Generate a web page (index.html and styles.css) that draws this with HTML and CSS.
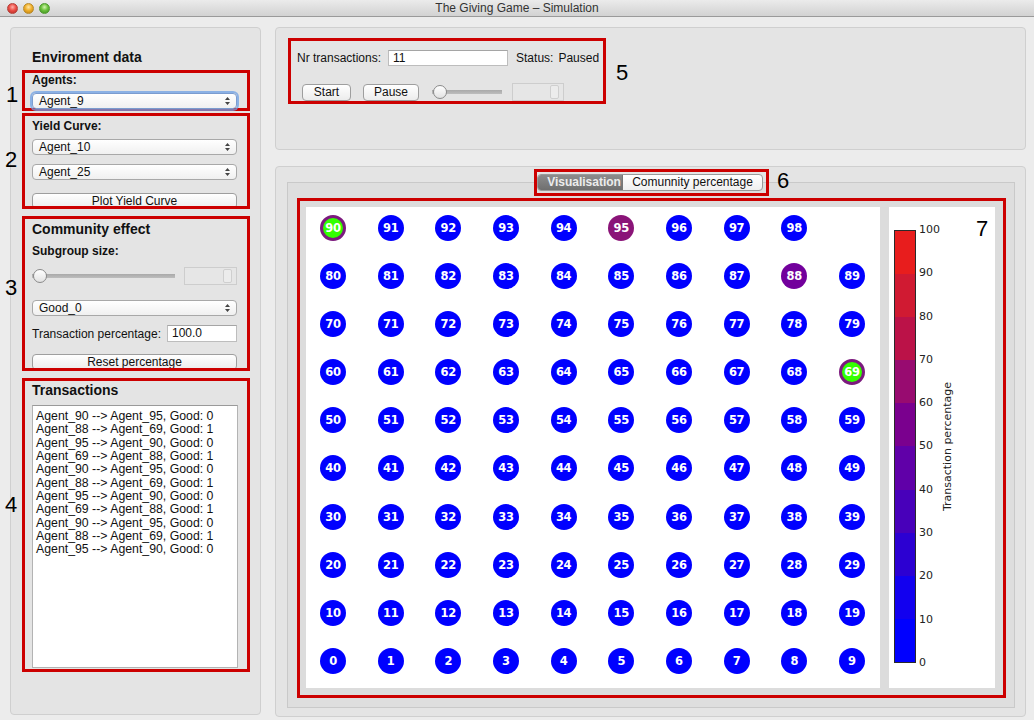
FILE: index.html
```html
<!DOCTYPE html>
<html>
<head>
<meta charset="utf-8">
<title>The Giving Game – Simulation</title>
<link rel="stylesheet" href="styles.css">
</head>
<body>
<div class="titlebar">
  <div class="lights"><span class="light l-red"></span><span class="light l-yellow"></span><span class="light l-green"></span></div>
  <div class="title">The Giving Game – Simulation</div>
  <div></div>
</div>

<div class="main">
  <div class="left">
    <div class="h1">Enviroment data</div>

    <div class="mark box1">
      <div class="lbl">Agents:</div>
      <div class="popup focus"><span>Agent_9</span><svg class="updown" width="7" height="10" viewBox="0 0 7 10"><path d="M3.5 1L6 4H1Z M3.5 9L1 6H6Z" fill="#444"/></svg></div>
    </div>

    <div class="mark box2">
      <div class="lbl">Yield Curve:</div>
      <div class="popup p1"><span>Agent_10</span><svg class="updown" width="7" height="10" viewBox="0 0 7 10"><path d="M3.5 1L6 4H1Z M3.5 9L1 6H6Z" fill="#444"/></svg></div>
      <div class="popup p2"><span>Agent_25</span><svg class="updown" width="7" height="10" viewBox="0 0 7 10"><path d="M3.5 1L6 4H1Z M3.5 9L1 6H6Z" fill="#444"/></svg></div>
      <div class="btn wide b1">Plot Yield Curve</div>
    </div>

    <div class="mark box3">
      <div class="h1 h1b">Community effect</div>
      <div class="lbl l2">Subgroup size:</div>
      <div class="slide-row">
        <div class="slider s-left"><span class="thumb"></span></div>
        <div class="spin s-left-spin"><span class="stepper"></span></div>
      </div>
      <div class="popup p3"><span>Good_0</span><svg class="updown" width="7" height="10" viewBox="0 0 7 10"><path d="M3.5 1L6 4H1Z M3.5 9L1 6H6Z" fill="#444"/></svg></div>
      <div class="pct-row">
        <span class="txt">Transaction percentage:</span>
        <div class="field pct">100.0</div>
      </div>
      <div class="btn wide b2">Reset percentage</div>
    </div>

    <div class="mark box4">
      <div class="h1">Transactions</div>
      <div class="list">
        <div>Agent_90 --&gt; Agent_95, Good: 0</div>
        <div>Agent_88 --&gt; Agent_69, Good: 1</div>
        <div>Agent_95 --&gt; Agent_90, Good: 0</div>
        <div>Agent_69 --&gt; Agent_88, Good: 1</div>
        <div>Agent_90 --&gt; Agent_95, Good: 0</div>
        <div>Agent_88 --&gt; Agent_69, Good: 1</div>
        <div>Agent_95 --&gt; Agent_90, Good: 0</div>
        <div>Agent_69 --&gt; Agent_88, Good: 1</div>
        <div>Agent_90 --&gt; Agent_95, Good: 0</div>
        <div>Agent_88 --&gt; Agent_69, Good: 1</div>
        <div>Agent_95 --&gt; Agent_90, Good: 0</div>
      </div>
    </div>
  </div>

  <div class="right">
    <div class="panel top-panel">
      <div class="mark box5">
        <div class="row1">
          <span class="txt">Nr transactions:</span>
          <div class="field nr">11</div>
          <span class="txt status">Status:</span>
          <span class="txt paused">Paused</span>
        </div>
        <div class="row2">
          <div class="btn start">Start</div>
          <div class="btn pause">Pause</div>
          <div class="slider s-top"><span class="thumb"></span></div>
          <div class="spin s-top-spin"><span class="stepper"></span></div>
        </div>
      </div>
    </div>

    <div class="panel bottom-panel">
      <div class="tabhead">
        <div class="mark box6">
          <div class="tabs">
            <div class="tab sel">Visualisation</div>
            <div class="tab">Comunnity percentage</div>
          </div>
        </div>
      </div>
      <div class="pane">
        <div class="mark box7">
          <div class="grid">
            <div class="node ring">90</div><div class="node">91</div><div class="node">92</div><div class="node">93</div><div class="node">94</div><div class="node c95">95</div><div class="node">96</div><div class="node">97</div><div class="node">98</div><div class="empty"></div>
            <div class="node">80</div><div class="node">81</div><div class="node">82</div><div class="node">83</div><div class="node">84</div><div class="node">85</div><div class="node">86</div><div class="node">87</div><div class="node c88">88</div><div class="node">89</div>
            <div class="node">70</div><div class="node">71</div><div class="node">72</div><div class="node">73</div><div class="node">74</div><div class="node">75</div><div class="node">76</div><div class="node">77</div><div class="node">78</div><div class="node">79</div>
            <div class="node">60</div><div class="node">61</div><div class="node">62</div><div class="node">63</div><div class="node">64</div><div class="node">65</div><div class="node">66</div><div class="node">67</div><div class="node">68</div><div class="node ring">69</div>
            <div class="node">50</div><div class="node">51</div><div class="node">52</div><div class="node">53</div><div class="node">54</div><div class="node">55</div><div class="node">56</div><div class="node">57</div><div class="node">58</div><div class="node">59</div>
            <div class="node">40</div><div class="node">41</div><div class="node">42</div><div class="node">43</div><div class="node">44</div><div class="node">45</div><div class="node">46</div><div class="node">47</div><div class="node">48</div><div class="node">49</div>
            <div class="node">30</div><div class="node">31</div><div class="node">32</div><div class="node">33</div><div class="node">34</div><div class="node">35</div><div class="node">36</div><div class="node">37</div><div class="node">38</div><div class="node">39</div>
            <div class="node">20</div><div class="node">21</div><div class="node">22</div><div class="node">23</div><div class="node">24</div><div class="node">25</div><div class="node">26</div><div class="node">27</div><div class="node">28</div><div class="node">29</div>
            <div class="node">10</div><div class="node">11</div><div class="node">12</div><div class="node">13</div><div class="node">14</div><div class="node">15</div><div class="node">16</div><div class="node">17</div><div class="node">18</div><div class="node">19</div>
            <div class="node">0</div><div class="node">1</div><div class="node">2</div><div class="node">3</div><div class="node">4</div><div class="node">5</div><div class="node">6</div><div class="node">7</div><div class="node">8</div><div class="node">9</div>
          </div>
          <div class="cbar-panel">
            <div class="cbar-row">
              <div class="bar">
                <span class="blk k9"></span><span class="blk k8"></span><span class="blk k7"></span><span class="blk k6"></span><span class="blk k5"></span><span class="blk k4"></span><span class="blk k3"></span><span class="blk k2"></span><span class="blk k1"></span><span class="blk k0"></span>
              </div>
              <div class="ticks">
                <span>100</span><span>90</span><span>80</span><span>70</span><span>60</span><span>50</span><span>40</span><span>30</span><span>20</span><span>10</span><span>0</span>
              </div>
              <div class="cbar-label">Transaction percentage</div>
            </div>
          </div>
        </div>
      </div>
    </div>
  </div>
</div>

<div class="anno a1">1</div>
<div class="anno a2">2</div>
<div class="anno a3">3</div>
<div class="anno a4">4</div>
<div class="anno a5">5</div>
<div class="anno a6">6</div>
<div class="anno a7">7</div>
</body>
</html>
```

FILE: styles.css
```css
* { box-sizing: border-box; }
html, body { margin: 0; padding: 0; }
body {
  width: 1034px;
  height: 720px;
  overflow: hidden;
  position: relative;
  background: #ececec;
  font-family: "Liberation Sans", Arial, sans-serif;
  font-size: 12px;
  color: #111;
}

/* title bar */
.titlebar {
  height: 17px;
  display: grid;
  grid-template-columns: 70px 1fr 70px;
  align-items: center;
  background: linear-gradient(#ebebeb, #d2d2d2);
  border-bottom: 1px solid #9a9a9a;
}
.lights { display: flex; gap: 5px; padding-left: 7px; }
.light { width: 11px; height: 11px; border-radius: 50%; display: block; }
.l-red { background: radial-gradient(circle at 50% 35%, #ffb0a8 0, #ec5048 45%, #b3261e 100%); border: 1px solid #b4423b; }
.l-yellow { background: radial-gradient(circle at 50% 35%, #ffe7a6 0, #f0b02c 45%, #b97a0c 100%); border: 1px solid #b88a2a; }
.l-green { background: radial-gradient(circle at 50% 35%, #d4f5b0 0, #6cc23d 45%, #3b8a1c 100%); border: 1px solid #4f9a30; }
.title { text-align: center; font-size: 12px; color: #333; line-height: 16px; }

/* main layout */
.main {
  display: flex;
  gap: 14px;
  padding: 10px 8px 0 10px;
}
.left {
  width: 251px;
  height: 688px;
  border: 1px solid #cfcfcf;
  border-radius: 4px;
  background: #e4e4e4;
  padding: 20px 0 0 11px;
}
.right {
  width: 751px;
  display: flex;
  flex-direction: column;
  gap: 16px;
}
.panel {
  border: 1px solid #cfcfcf;
  border-radius: 4px;
  background: #e4e4e4;
}
.top-panel { height: 123px; padding: 10px 0 0 12px; }
.bottom-panel { height: 551px; padding: 1px 10px 0 11px; }

/* texts */
.h1 { font-size: 14px; font-weight: bold; line-height: 18px; height: 18px; color: #111; }
.left > .h1 { margin: 0 0 4px 10px; }
.lbl { font-size: 12px; font-weight: bold; line-height: 14px; height: 14px; }
.txt { font-size: 12px; line-height: 16px; white-space: nowrap; }

/* red annotation boxes */
.mark { border: 3px solid #cc0000; }
.box1, .box2, .box3, .box4 { width: 228px; padding: 0 10px 0 7px; }
.box1 { height: 41px; }
.box1 .lbl { margin-bottom: 6px; }
.box2 { height: 96px; margin-top: 2px; padding-top: 3px; overflow: hidden; }
.box2 .p1 { margin-top: 6px; }
.box2 .p2 { margin-top: 9px; }
.box2 .b1 { margin-top: 13px; }
.box3 { height: 155px; margin-top: 7px; padding-top: 1px; overflow: hidden; }
.box3 .l2 { margin-top: 6px; }
.slide-row { display: flex; align-items: center; justify-content: space-between; margin-top: 9px; height: 18px; }
.box3 .p3 { margin-top: 15px; }
.pct-row { display: flex; align-items: center; justify-content: space-between; margin-top: 9px; height: 17px; }
.box3 .b2 { margin-top: 12px; }
.box4 { height: 294px; margin-top: 7px; }

/* controls */
.popup {
  height: 16px;
  display: flex;
  align-items: center;
  justify-content: space-between;
  padding: 0 5px 0 6px;
  border: 1px solid #a8a8a8;
  border-radius: 4px;
  background: linear-gradient(#ffffff, #f0f0f0);
  font-size: 12px;
  line-height: 14px;
}
.popup.focus { box-shadow: 0 0 0 2px rgba(110, 160, 230, 0.75); border-color: #7b9ccf; }
.updown { display: block; }
.btn {
  height: 16px;
  border: 1px solid #9e9e9e;
  border-radius: 4px;
  background: linear-gradient(#ffffff, #ececec);
  text-align: center;
  font-size: 12px;
  line-height: 14px;
  color: #111;
}
.wide { width: 205px; }
.field {
  height: 17px;
  background: #fff;
  border: 1px solid #bdbdbd;
  border-top-color: #a5a5a5;
  padding: 0 4px;
  font-size: 12px;
  line-height: 15px;
}
.pct { width: 70px; }
.slider {
  height: 14px;
  display: flex;
  align-items: center;
  background: linear-gradient(#a9a9a9, #bdbdbd) center / 100% 4px no-repeat;
  border-radius: 2px;
}
.thumb {
  width: 14px;
  height: 14px;
  border-radius: 50%;
  border: 1px solid #8a8a8a;
  background: linear-gradient(#ffffff, #e2e2e2);
  display: block;
  margin-left: 1px;
}
.s-left { width: 143px; }
.spin {
  height: 18px;
  border: 1px solid #cdcdcd;
  background: #e6e6e6;
  display: flex;
  justify-content: flex-end;
  align-items: center;
  padding-right: 4px;
}
.stepper { width: 9px; height: 14px; border: 1px solid #cfcfcf; border-radius: 2px; background: #ececec; display: block; }
.s-left-spin { width: 53px; }

.list {
  margin-top: 6px;
  width: 206px;
  height: 263px;
  background: #fff;
  border: 1px solid #b3b3b3;
  border-top-color: #9a9a9a;
  padding: 4px 3px;
  font-size: 12.3px;
  line-height: 13.33px;
  white-space: nowrap;
}

/* top panel */
.box5 { width: 318px; height: 66px; padding: 9px 0 0 6px; }
.row1 { display: flex; align-items: center; height: 16px; }
.nr { width: 120px; margin-left: 7px; height: 16px; line-height: 14px; }
.status { margin-left: 8px; }
.paused { margin-left: 5px; }
.row2 { display: flex; align-items: center; margin-top: 17px; height: 18px; }
.start { width: 49px; margin-left: 5px; height: 17px; }
.pause { width: 56px; margin-left: 12px; height: 17px; }
.s-top { width: 70px; margin-left: 13px; }
.s-top-spin { width: 52px; margin-left: 10px; }

/* bottom panel */
.tabhead { position: relative; z-index: 1; display: flex; justify-content: center; margin-top: 1px; }
.box6 { width: 235px; height: 27px; display: flex; align-items: center; justify-content: center; padding-right: 2px; }
.tabs {
  display: flex;
  height: 17px;
  border: 1px solid #9a9a9a;
  border-radius: 4px;
  overflow: hidden;
  background: linear-gradient(#ffffff, #efefef);
}
.tab { font-size: 12px; line-height: 15px; padding: 0 9px; white-space: nowrap; }
.tab.sel {
  width: 85px;
  background: linear-gradient(#8c8c8c, #6f6f6f);
  color: #ececec;
  font-weight: bold;
  border-right: 1px solid #777;
}
.pane {
  margin-top: -14px;
  height: 526px;
  border: 1px solid #c9c9c9;
  background: #dedede;
  padding: 15px 8px 9px 9px;
}
.box7 {
  width: 709px;
  height: 500px;
  background: #dcdcdc;
  padding: 6px 8px 7px 6px;
  display: flex;
  gap: 9px;
}
.grid {
  width: 574px;
  height: 481px;
  background: #fff;
  padding: 8px 0 0 14px;
  display: grid;
  grid-template-columns: repeat(10, 26px);
  grid-auto-rows: 26px;
  column-gap: 31.67px;
  row-gap: 22.1px;
}
.node {
  width: 26px;
  height: 26px;
  border-radius: 50%;
  background: #0000ff;
  color: #fff;
  font-family: "DejaVu Sans", sans-serif;
  font-weight: bold;
  font-size: 11.5px;
  display: flex;
  align-items: center;
  justify-content: center;
  letter-spacing: -0.3px;
}
.node.c95 { background: #8a1478; }
.node.c88 { background: #72009c; }
.node.ring { background: #33ff00; border: 3px solid #7c1a7e; }

.cbar-panel {
  width: 106px;
  height: 481px;
  background: #fff;
  padding: 23px 0 0 5px;
}
.cbar-row { display: flex; height: 433px; }
.bar {
  width: 22px;
  height: 433px;
  border: 1px solid #2a2a2a;
  display: flex;
  flex-direction: column;
}
.blk { flex: 1; display: block; }
.k9 { background: #e81d1d; }
.k8 { background: #d01a32; }
.k7 { background: #bb1248; }
.k6 { background: #980b70; }
.k5 { background: #7a008e; }
.k4 { background: #6000a8; }
.k3 { background: #4800ba; }
.k2 { background: #2c00d2; }
.k1 { background: #1200ef; }
.k0 { background: #0000ff; }
.ticks {
  height: 445px;
  margin-top: -6px;
  margin-left: 3px;
  display: flex;
  flex-direction: column;
  justify-content: space-between;
  font-family: "DejaVu Sans", sans-serif;
  font-size: 11px;
  line-height: 12px;
  color: #222;
}
.cbar-label {
  align-self: center;
  writing-mode: vertical-rl;
  transform: rotate(180deg);
  font-family: "DejaVu Sans", sans-serif;
  font-size: 11px;
  line-height: 13px;
  color: #222;
  margin-left: 1px;
  white-space: nowrap;
}

/* annotation numbers */
.anno {
  position: absolute;
  font-family: "Liberation Sans", Arial, sans-serif;
  font-size: 22px;
  line-height: 22px;
  color: #000;
}
.a1 { left: 6px; top: 84px; }
.a2 { left: 5px; top: 149px; }
.a3 { left: 5px; top: 277px; }
.a4 { left: 5px; top: 494px; }
.a5 { left: 616px; top: 62px; }
.a6 { left: 777px; top: 170px; }
.a7 { left: 976px; top: 218px; }
```
